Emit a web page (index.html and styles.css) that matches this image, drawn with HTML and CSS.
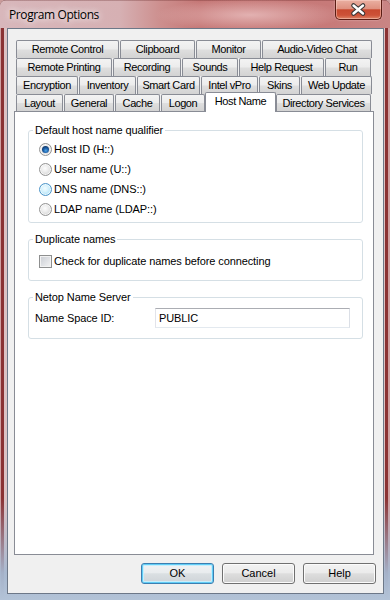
FILE: index.html
```html
<!DOCTYPE html>
<html>
<head>
<meta charset="utf-8">
<link rel="stylesheet" href="styles.css">
</head>
<body>
<div class="window">
  <div class="titlebar">
    <span class="title">Program Options</span>
    <button class="close" aria-label="Close">
      <svg width="45" height="19" viewBox="0 0 45 19">
        <path d="M17.5 5.5 L27 13.5 M27 5.5 L17.5 13.5" stroke="#3a3636" stroke-width="4.6" stroke-linecap="round" fill="none"/>
        <path d="M17.5 5.5 L27 13.5 M27 5.5 L17.5 13.5" stroke="#ffffff" stroke-width="2.4" stroke-linecap="round" fill="none"/>
      </svg>
    </button>
  </div>
  <div class="frame">
    <div class="client">
      <div class="tabs">
        <div class="row r1">
          <div class="tab">Remote Control</div>
          <div class="tab">Clipboard</div>
          <div class="tab">Monitor</div>
          <div class="tab">Audio-Video Chat</div>
        </div>
        <div class="row r2">
          <div class="tab">Remote Printing</div>
          <div class="tab">Recording</div>
          <div class="tab">Sounds</div>
          <div class="tab">Help Request</div>
          <div class="tab">Run</div>
        </div>
        <div class="row r3">
          <div class="tab">Encryption</div>
          <div class="tab">Inventory</div>
          <div class="tab">Smart Card</div>
          <div class="tab">Intel vPro</div>
          <div class="tab">Skins</div>
          <div class="tab">Web Update</div>
        </div>
        <div class="row r4">
          <div class="tab">Layout</div>
          <div class="tab">General</div>
          <div class="tab">Cache</div>
          <div class="tab">Logon</div>
          <div class="tab sel">Host Name</div>
          <div class="tab">Directory Services</div>
        </div>
      </div>
      <div class="panel">
        <fieldset class="group g1">
          <legend>Default host name qualifier</legend>
          <div class="opt"><span class="radio on"></span>Host ID (H::)</div>
          <div class="opt"><span class="radio"></span>User name (U::)</div>
          <div class="opt"><span class="radio hover"></span>DNS name (DNS::)</div>
          <div class="opt"><span class="radio"></span>LDAP name (LDAP::)</div>
        </fieldset>
        <fieldset class="group g2">
          <legend>Duplicate names</legend>
          <div class="opt"><span class="check"></span>Check for duplicate names before connecting</div>
        </fieldset>
        <fieldset class="group g3">
          <legend>Netop Name Server</legend>
          <div class="ns-row">
            <span class="ns-label">Name Space ID:</span>
            <input class="textbox" type="text" value="PUBLIC" readonly>
          </div>
        </fieldset>
      </div>
      <div class="buttons">
        <button class="btn default">OK</button>
        <button class="btn">Cancel</button>
        <button class="btn">Help</button>
      </div>
    </div>
  </div>
</div>
</body>
</html>
```
FILE: styles.css
```css
* { box-sizing: border-box; }

html, body {
  margin: 0;
  padding: 0;
}

body {
  width: 390px;
  height: 600px;
  overflow: hidden;
  font-family: "Liberation Sans", Arial, sans-serif;
  font-size: 11px;
  letter-spacing: -0.1px;
  color: #000;
  background: #c99a9a;
}

.window {
  width: 390px;
  height: 600px;
  display: flex;
  flex-direction: column;
  border-radius: 6px 6px 0 0;
  overflow: hidden;
  background: #d2a9ab;
  box-shadow: inset 0 1px 0 #5a2a2c;
}

/* ---------- title bar ---------- */
.titlebar {
  height: 28px;
  flex: none;
  display: flex;
  align-items: flex-start;
  padding-left: 9px;
  background:
    radial-gradient(ellipse 95px 16px at 250px 15px, rgba(236, 196, 196, 0.75), rgba(236, 196, 196, 0) 100%),
    linear-gradient(to bottom, rgba(90, 30, 30, 0.55) 0, rgba(90, 30, 30, 0) 1px),
    linear-gradient(to right, #d8b7bb 0, #d6b0b3 120px, #cd8f8e 160px, #c57776 200px, #c77a79 330px, #c98584 390px);
}

.title {
  padding-top: 6px;
  font-family: "Open Sans", "Noto Sans", sans-serif;
  font-size: 12px;
  letter-spacing: -0.4px;
  line-height: 17px;
  color: #000;
  text-shadow: 0 0 6px rgba(255, 255, 255, 0.9), 0 0 10px rgba(255, 255, 255, 0.7);
}

.close {
  margin-left: auto;
  margin-right: 8px;
  width: 47px;
  height: 20px;
  padding: 0;
  border: 1px solid #5a1d14;
  border-top: none;
  border-radius: 0 0 5px 5px;
  background: linear-gradient(to bottom, #eab0a2 0, #df9180 45%, #c8492f 52%, #cd5238 80%, #de8466 100%);
  box-shadow: inset 0 0 0 1px rgba(255, 220, 210, 0.45), 0 0 2px rgba(255, 230, 230, 0.6);
  display: flex;
  align-items: center;
  justify-content: center;
}

.close svg { display: block; }

/* ---------- frame ---------- */
.frame {
  flex: 1;
  display: flex;
  padding: 0 6px 6px 7px;
  background:
    linear-gradient(to bottom, rgba(170, 188, 210, 0) 0, rgba(170, 188, 210, 0) 470px, rgba(166, 184, 208, 0.95) 545px, #b3c3d7 572px),
    linear-gradient(to right,
      #cfa0a1 0, #cfa0a1 1px,
      #8b3233 1px, #8b3233 4px,
      #dcc2c3 4px, #dcc2c3 7px,
      #d2a9ab 7px, #d2a9ab 384px,
      #dcc2c3 384px, #dcc2c3 385px,
      #8b3233 385px, #8b3233 388px,
      #cf9fa0 388px);
}

.client {
  flex: 1;
  display: flex;
  flex-direction: column;
  background: #f0f0f0;
  border: 1px solid #6d7888;
  padding: 11px 7px 9px 6px;
}

/* ---------- tabs ---------- */
.tabs {
  margin-left: 2px;
  display: flex;
  flex-direction: column;
}

.row {
  display: flex;
  gap: 1px;
  height: 18px;
}

.row.r4 { height: 17px; }

.tab {
  flex: none;
  height: 100%;
  border: 1px solid #898c95;
  border-bottom: none;
  border-radius: 2px 2px 0 0;
  background: linear-gradient(to bottom, #f3f3f3 0, #ececec 48%, #dedede 52%, #d3d3d3 100%);
  text-align: center;
  line-height: 17px;
  letter-spacing: -0.4px;
  white-space: nowrap;
  overflow: hidden;
}

.r4 .tab { line-height: 16px; }

.r1 .tab:nth-child(1) { width: 103px; }
.r1 .tab:nth-child(2) { width: 75px; }
.r1 .tab:nth-child(3) { width: 65px; }
.r1 .tab:nth-child(4) { width: 110px; }

.r2 .tab:nth-child(1) { width: 96px; }
.r2 .tab:nth-child(2) { width: 68px; }
.r2 .tab:nth-child(3) { width: 56px; }
.r2 .tab:nth-child(4) { width: 85px; }
.r2 .tab:nth-child(5) { width: 46px; }

.r3 .tab:nth-child(1) { width: 62px; }
.r3 .tab:nth-child(2) { width: 57px; }
.r3 .tab:nth-child(3) { width: 63px; }
.r3 .tab:nth-child(4) { width: 57px; }
.r3 .tab:nth-child(5) { width: 41px; }
.r3 .tab:nth-child(6) { width: 71px; }

.r4 .tab:nth-child(1) { width: 47px; }
.r4 .tab:nth-child(2) { width: 50px; }
.r4 .tab:nth-child(3) { width: 45px; }
.r4 .tab:nth-child(4) { width: 44px; }
.r4 .tab:nth-child(5) { width: 71px; }
.r4 .tab:nth-child(6) { width: 95px; }

.tab.sel {
  position: relative;
  z-index: 1;
  height: 20px;
  margin: -2px -1px -1px -1px;
  background: #fff;
  border-radius: 2px 2px 0 0;
}

/* ---------- panel ---------- */
.panel {
  width: 360px;
  height: 444px;
  flex: none;
  background: #fff;
  border: 1px solid #898c95;
  padding: 12px 10px 0 13px;
}

.group {
  margin: 0;
  min-width: 0;
  width: 335px;
  border: 1px solid #d5dfe5;
  border-radius: 3px;
  padding: 2px 6px 3px 6px;
}

.group legend {
  margin-left: -2px;
  padding: 0 2px;
  line-height: 13px;
  font-size: 11px;
}

.g1 { padding-top: 2px; padding-bottom: 3px; }
.g2 { margin-top: 10px; padding-top: 5px; padding-bottom: 9px; }
.g3 { margin-top: 10px; padding-top: 4px; padding-bottom: 10px; }

.opt {
  display: flex;
  align-items: center;
  height: 20px;
  padding-left: 4px;
  line-height: 13px;
  white-space: nowrap;
}

.radio {
  position: relative;
  flex: none;
  width: 13px;
  height: 13px;
  margin-right: 2px;
  border-radius: 50%;
  border: 1px solid #949494;
  background: radial-gradient(circle at 45% 40%, #fdfdfd 0, #eeeeee 35%, #d2d2d2 80%, #c4c4c4 100%);
  box-shadow: inset 0 0 0 1px rgba(255, 255, 255, 0.7);
}

.radio.on::after {
  content: "";
  position: absolute;
  left: 2px;
  top: 2px;
  width: 7px;
  height: 7px;
  border-radius: 50%;
  background: radial-gradient(circle at 55% 65%, #4fa7e8 0, #1c5fa8 40%, #0b2c55 85%, #0a2240 100%);
}

.radio.hover {
  border-color: #4d94c8;
  background: radial-gradient(circle at 45% 40%, #f3fcff 0, #d8f3fd 35%, #a7def6 80%, #8fd0f0 100%);
}

.check {
  flex: none;
  width: 13px;
  height: 13px;
  margin-right: 2px;
  border: 1px solid #8e8f8f;
  background: linear-gradient(135deg, #c9ccd2 0, #dcdee2 45%, #f4f4f4 100%);
  box-shadow: inset 0 0 0 1px #f2f2f2;
}

.ns-row {
  display: flex;
  align-items: center;
  height: 20px;
  line-height: 13px;
}

.ns-label {
  width: 120px;
  flex: none;
}

.textbox {
  width: 195px;
  height: 20px;
  margin: 0;
  padding: 0 3px;
  border: 1px solid;
  border-color: #abadb3 #dbdfe6 #e3e9ef #e2e3ea;
  background: #fff;
  font-family: "Liberation Sans", Arial, sans-serif;
  font-size: 11px;
  letter-spacing: -0.1px;
  color: #000;
  outline: none;
}

/* ---------- buttons ---------- */
.buttons {
  display: flex;
  justify-content: flex-end;
  gap: 8px;
  margin-top: 8px;
}

.btn {
  width: 73px;
  height: 21px;
  padding: 0;
  border: 1px solid #707070;
  border-radius: 3px;
  background: linear-gradient(to bottom, #f2f2f2 0, #ebebeb 45%, #dddddd 52%, #cfcfcf 100%);
  box-shadow: inset 0 0 0 1px #fbfbfb;
  font-family: "Liberation Sans", Arial, sans-serif;
  font-size: 11px;
  line-height: 19px;
  color: #000;
}

.btn.default {
  border-color: #3c7fb1;
  box-shadow: inset 0 0 0 1px #61cdf6, inset 0 0 0 2px #c7eefc;
  background: linear-gradient(to bottom, #f1f3f4 0, #e9ecee 45%, #dadfe2 52%, #cfd4d8 100%);
}
```
